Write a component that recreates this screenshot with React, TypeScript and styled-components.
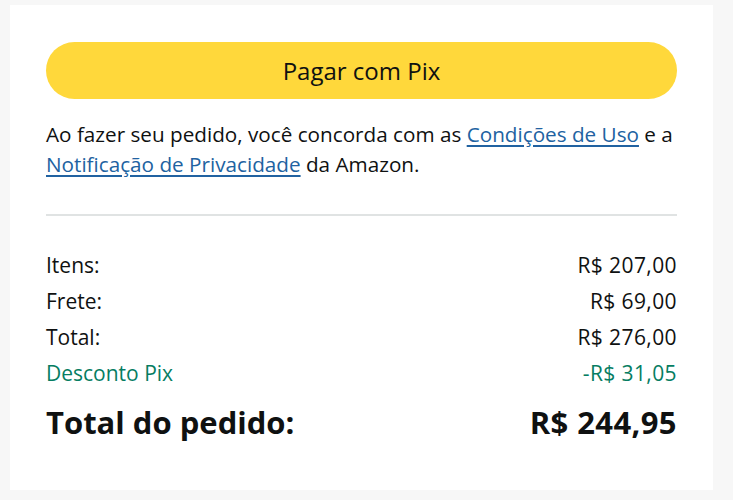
import styled, { createGlobalStyle } from "styled-components";

const GlobalStyle = createGlobalStyle`
  html, body {
    margin: 0;
    padding: 0;
    background: #f7f7f7;
  }
  body {
    font-family: "Open Sans", "Liberation Sans", Arial, sans-serif;
    color: #0f1111;
  }
`;

const Page = styled.div`
  padding: 5px 20px 10px 10px;
`;

const Card = styled.div`
  background: #ffffff;
  width: 703px;
  height: 485px;
  box-sizing: border-box;
  padding: 37px 36px 0 36px;
`;

const PayButton = styled.button`
  display: block;
  width: 100%;
  height: 57px;
  border: none;
  border-radius: 29px;
  background: #ffd83b;
  color: #0f1111;
  font-family: inherit;
  font-size: 24px;
  cursor: pointer;
`;

const Terms = styled.p`
  margin: 20px 0 0;
  font-size: 20.7px;
  line-height: 30px;
`;

const TermsLink = styled.a`
  color: #2162a1;
  text-decoration: underline;
  text-underline-offset: 3px;
  cursor: pointer;
`;

const Divider = styled.hr`
  border: none;
  height: 2px;
  background: #e0e3e3;
  margin: 35px 0 0;
`;

const Summary = styled.div`
  margin-top: 34px;
  display: flex;
  flex-direction: column;
  gap: 6px;
`;

const Row = styled.div<{ $tone?: "discount" }>`
  display: flex;
  justify-content: space-between;
  font-size: 21px;
  line-height: 30px;
  color: ${(p) => (p.$tone === "discount" ? "#067d62" : "#0f1111")};
`;

const Amount = styled.span`
  letter-spacing: 0.4px;
`;

const TotalRow = styled.div`
  display: flex;
  justify-content: space-between;
  margin-top: 8px;
  font-size: 31px;
  font-weight: 700;
  line-height: 40px;
`;

const lines = [
  { label: "Itens:", value: "R$ 207,00" },
  { label: "Frete:", value: "R$ 69,00" },
  { label: "Total:", value: "R$ 276,00" },
];

export default function App() {
  return (
    <>
      <GlobalStyle />
      <Page>
        <Card>
          <PayButton>Pagar com Pix</PayButton>
          <Terms>
            Ao fazer seu pedido, você concorda com as{" "}
            <TermsLink>Condições de Uso</TermsLink> e a{" "}
            <TermsLink>Notificação de Privacidade</TermsLink> da Amazon.
          </Terms>
          <Divider />
          <Summary>
            {lines.map((l) => (
              <Row key={l.label}>
                <span>{l.label}</span>
                <Amount>{l.value}</Amount>
              </Row>
            ))}
            <Row $tone="discount">
              <span>Desconto Pix</span>
              <Amount>-R$ 31,05</Amount>
            </Row>
            <TotalRow>
              <span>Total do pedido:</span>
              <Amount>R$ 244,95</Amount>
            </TotalRow>
          </Summary>
        </Card>
      </Page>
    </>
  );
}
